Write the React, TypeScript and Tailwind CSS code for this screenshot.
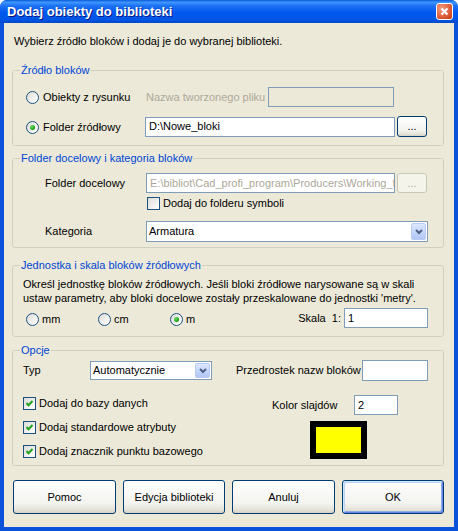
import type { ReactNode } from "react";

const btn =
  "flex items-center justify-center rounded-[3px] border border-[#003C74] bg-[linear-gradient(to_bottom,#FFFFFF,#F3F3EF_70%,#E5E3DA_90%,#D6D0C5)] text-black";
const btnDisabled =
  "flex items-center justify-center rounded-[3px] border border-[#C9C7BA] bg-[#F5F4EA] text-[#ACA899]";
const input = "flex items-center border border-[#7F9DB9] bg-white pl-[3px] whitespace-nowrap overflow-hidden";

function Radio({ checked }: { checked?: boolean }) {
  return (
    <span className="flex h-[13px] w-[13px] shrink-0 items-center justify-center rounded-full border border-[#1C5180] bg-[linear-gradient(135deg,#DCDCD7,#FFFFFF)]">
      {checked && (
        <span className="h-[5px] w-[5px] rounded-full bg-[radial-gradient(circle_at_35%_35%,#6DE46A,#21A121_60%,#167716)]" />
      )}
    </span>
  );
}

function Check({ checked }: { checked?: boolean }) {
  return (
    <span className="flex h-[13px] w-[13px] shrink-0 items-center justify-center border border-[#1C5180] bg-[linear-gradient(135deg,#DCDCD7,#FFFFFF)]">
      {checked && (
        <svg width="9" height="9" viewBox="0 0 9 9">
          <polyline points="1.5,4 3.5,6.2 7.5,2" fill="none" stroke="#21A121" strokeWidth="2" />
        </svg>
      )}
    </span>
  );
}

function Combo({ value, className }: { value: string; className: string }) {
  return (
    <div className={"flex items-center border border-[#7F9DB9] bg-white " + className}>
      <span className="flex-1 pl-[2px]">{value}</span>
      <span className="m-[1px] flex h-[calc(100%-2px)] w-[15px] items-center justify-center rounded-[2px] border border-[#B9CBF3] bg-[linear-gradient(to_bottom,#DDE8FE,#C2D4FC_60%,#B2C6F5)]">
        <svg width="8" height="6" viewBox="0 0 8 6">
          <polyline points="1,1 4,4 7,1" fill="none" stroke="#4D6185" strokeWidth="2" />
        </svg>
      </span>
    </div>
  );
}

function Group({ title, className, children }: { title: string; className: string; children: ReactNode }) {
  return (
    <fieldset className={"rounded-[3px] border border-[#D0D0BF] " + className}>
      <legend className="ml-[7px] px-[1px] leading-[13px] text-[#0046D5]">{title}</legend>
      {children}
    </fieldset>
  );
}

export default function App() {
  return (
    <div className="flex h-[531px] w-[458px] flex-col overflow-hidden rounded-t-[7px] bg-[#0B52DA] font-['Liberation_Sans',Arial,sans-serif] text-[11px] leading-[13px] text-black">
      <div className="flex h-[23px] shrink-0 items-center bg-[linear-gradient(to_bottom,#0A5AD6_0%,#3F97FF_10%,#1E72F3_25%,#0058EE_55%,#0055E5_85%,#0048C8_100%)] pl-[7px] pr-[5px]">
        <span className="flex-1 text-[13px] font-bold text-white [text-shadow:1px_1px_#0A1883]">
          Dodaj obiekty do biblioteki
        </span>
        <span className="flex h-[17px] w-[17px] items-center justify-center rounded-[3px] border border-white bg-[radial-gradient(circle_at_30%_30%,#F19B80,#E0603D_55%,#C2350F)]">
          <svg width="9" height="9" viewBox="0 0 9 9">
            <path d="M1.5 1.5 L7.5 7.5 M7.5 1.5 L1.5 7.5" stroke="white" strokeWidth="2.2" />
          </svg>
        </span>
      </div>

      <div className="mx-[4px] mb-[4px] flex flex-1 flex-col bg-[#ECE9D8] pl-[8px] pr-[10px]">
        <div className="mt-[12px] pl-[2px]">Wybierz źródło bloków i dodaj je do wybranej biblioteki.</div>

        <Group title="Źródło bloków" className="mt-[16px] h-[82px]">
          <div className="mt-[10px] flex h-[20px] items-center pl-[13px]">
            <div className="flex w-[119px] items-center gap-[4px]">
              <Radio />
              <span>Obiekty z rysunku</span>
            </div>
            <span className="w-[123px] pl-[1px] text-[#ACA899]">Nazwa tworzonego pliku</span>
            <div className="h-[20px] w-[126px] border border-[#7F9DB9]" />
          </div>
          <div className="mt-[9px] flex h-[21px] items-center pl-[13px]">
            <div className="flex w-[119px] items-center gap-[4px] pt-[2px]">
              <Radio checked />
              <span>Folder źródłowy</span>
            </div>
            <div className={input + " h-[20px] w-[250px]"}>{"D:\\Nowe_bloki"}</div>
            <div className={btn + " ml-[2px] h-[21px] w-[30px]"}>...</div>
          </div>
        </Group>

        <Group title="Folder docelowy i kategoria bloków" className="mt-[6px] h-[96px]">
          <div className="mt-[8px] flex h-[20px] items-center pl-[32px]">
            <span className="w-[101px]">Folder docelowy</span>
            <div className={input + " h-[20px] w-[249px] bg-[#ECE9D8] text-[#ACA899]"}>
              <span className="overflow-hidden">{"E:\\bibliot\\Cad_profi_program\\Producers\\Working_f"}</span>
            </div>
            <div className={btnDisabled + " ml-[2px] h-[20px] w-[30px]"}>...</div>
          </div>
          <div className="mt-[3px] flex h-[15px] items-center gap-[3px] pl-[134px]">
            <Check />
            <span>Dodaj do folderu symboli</span>
          </div>
          <div className="mt-[10px] flex h-[21px] items-center pl-[32px]">
            <span className="w-[101px]">Kategoria</span>
            <Combo value="Armatura" className="h-[21px] w-[282px]" />
          </div>
        </Group>

        <Group title="Jednostka i skala bloków źródłowych" className="mt-[11px] h-[78px]">
          <div className="mt-[5px] pl-[10px] leading-[14px]">
            Określ jednostkę bloków źródłowych. Jeśli bloki źródłowe narysowane są w skali
            <br />
            ustaw parametry, aby bloki docelowe zostały przeskalowane do jednostki 'metry'.
          </div>
          <div className="mt-[3px] flex h-[20px] items-center pl-[13px]">
            <div className="flex w-[72px] items-center gap-[3px] pt-[3px]">
              <Radio />
              <span>mm</span>
            </div>
            <div className="flex w-[72px] items-center gap-[3px] pt-[3px]">
              <Radio />
              <span>cm</span>
            </div>
            <div className="flex w-[72px] items-center gap-[3px] pt-[3px]">
              <Radio checked />
              <span>m</span>
            </div>
            <span className="w-[102px] pr-[3px] text-right">Skala&nbsp; 1:</span>
            <div className={input + " h-[20px] w-[84px]"}>1</div>
          </div>
        </Group>

        <Group title="Opcje" className="mt-[7px] h-[122px]">
          <div className="flex">
            <div className="flex w-[223px] flex-col pl-[10px]">
              <div className="mt-[4px] flex h-[19px] items-center">
                <span className="w-[67px]">Typ</span>
                <Combo value="Automatycznie" className="h-[19px] w-[122px]" />
              </div>
              <div className="mt-[15px] flex h-[16px] items-center gap-[3px]">
                <Check checked />
                <span>Dodaj do bazy danych</span>
              </div>
              <div className="mt-[8px] flex h-[16px] items-center gap-[3px]">
                <Check checked />
                <span>Dodaj standardowe atrybuty</span>
              </div>
              <div className="mt-[8px] flex h-[16px] items-center gap-[3px]">
                <Check checked />
                <span>Dodaj znacznik punktu bazowego</span>
              </div>
            </div>
            <div className="flex flex-col">
              <div className="mt-[3px] flex h-[21px] items-center">
                <span className="w-[126px]">Przedrostek nazw bloków</span>
                <div className={input + " h-[21px] w-[66px]"} />
              </div>
              <div className="mt-[14px] flex h-[20px] items-center pl-[36px]">
                <span className="w-[82px]">Kolor slajdów</span>
                <div className={input + " h-[20px] w-[44px]"}>2</div>
              </div>
              <div className="ml-[74px] mt-[6px] h-[38px] w-[57px] border-[6px] border-black bg-[#FFFF00]" />
            </div>
          </div>
        </Group>

        <div className="ml-[1px] mt-[14px] flex gap-[7px]">
          <div className={btn + " h-[34px] w-[103px]"}>Pomoc</div>
          <div className={btn + " h-[34px] w-[102px]"}>Edycja biblioteki</div>
          <div className={btn + " h-[34px] w-[103px]"}>Anuluj</div>
          <div
            className={
              btn +
              " h-[34px] w-[102px] shadow-[inset_1px_1px_0_#CEE7FF,inset_-1px_-1px_0_#6982EE,inset_2px_2px_0_#BCD4F6,inset_-2px_-2px_0_#89ADE4]"
            }
          >
            OK
          </div>
        </div>
      </div>
    </div>
  );
}
